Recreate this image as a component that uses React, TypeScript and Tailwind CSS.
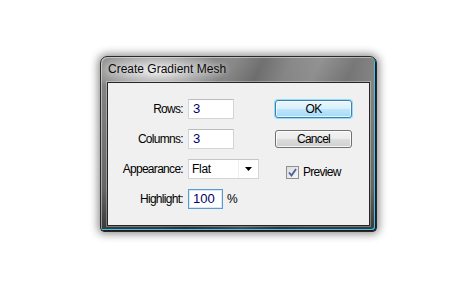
import React from 'react';

const ui = "font-['Liberation_Sans',Arial,sans-serif] text-[12px] tracking-[-0.7px] text-black";

function Field({ label, children }: { label: string; children: React.ReactNode }) {
  return (
    <>
      <span className="h-[20px] leading-[20px] text-right">{label}</span>
      <div className="h-[20px] flex items-center">{children}</div>
    </>
  );
}

function TextBox({ value, width, focused }: { value: string; width: string; focused?: boolean }) {
  return (
    <div
      className={
        focused
          ? `${width} h-[20px] bg-white border border-[#5d9ad2] shadow-[inset_0_0_0_1px_#d6e8f7] pl-[4px] leading-[18px] text-[13px] tracking-normal text-[#00006a]`
          : `${width} h-[20px] bg-white border border-[#d2d4d8] border-t-[#b9bcc2] pl-[4px] leading-[18px] text-[13px] tracking-normal text-[#00006a]`
      }
    >
      {value}
    </div>
  );
}

function Select() {
  return (
    <div className="w-[71px] h-[20px] bg-white border border-[#d2d4d8] border-t-[#c2c5ca] flex">
      <span className="flex-1 pl-[3px] leading-[18px] tracking-[-0.3px] border-r border-[#eceef1]">Flat</span>
      <span className="w-[19px] flex items-center justify-center">
        <svg width="7" height="4" viewBox="0 0 7 4">
          <path d="M0 0H7L3.5 4Z" fill="#000" />
        </svg>
      </span>
    </div>
  );
}

export default function App() {
  return (
    <div className="w-[467px] h-[286px] bg-white pt-[56px] pl-[100px]">
      <div className="w-[277px] h-[176px] flex flex-col rounded-t-[7px] rounded-b-[4px] border border-[#2a2a2a] bg-[radial-gradient(ellipse_70px_22px_at_55px_14px,rgba(255,255,255,0.85),rgba(255,255,255,0)),linear-gradient(115deg,rgba(0,0,0,0)_38%,rgba(0,0,0,0.18)_46%,rgba(0,0,0,0)_54%,rgba(255,255,255,0.08)_62%,rgba(0,0,0,0.12)_72%,rgba(0,0,0,0)_80%),linear-gradient(to_bottom,#8a8a8a,#7c7c7c_35%,#666666_75%,#383838)] shadow-[inset_-1px_-1px_0_#1c1c1c,inset_-2px_-2px_0_#3cc4ee,inset_1px_1px_0_rgba(255,255,255,0.45),0_0_9px_2px_rgba(0,0,0,0.45)]">
        <div className="h-[25px] pl-[7px] leading-[25px] font-['Liberation_Sans',Arial,sans-serif] text-[12px] text-[#0a0a0a] [text-shadow:0_0_6px_rgba(255,255,255,0.9)]">
          Create Gradient Mesh
        </div>
        <div className={`${ui} mx-[6px] w-[263px] h-[144px] bg-[#f0f0f0] border border-[#262626] shadow-[0_0_0_1px_rgba(255,255,255,0.3)] flex`}>
          <div className="w-[167px] pt-[16px]">
            <div className="grid grid-cols-[75px_auto] gap-x-[5px] gap-y-[10px]">
              <Field label="Rows:">
                <TextBox value="3" width="w-[46px]" />
              </Field>
              <Field label="Columns:">
                <TextBox value="3" width="w-[46px]" />
              </Field>
              <Field label="Appearance:">
                <Select />
              </Field>
              <Field label="Highlight:">
                <TextBox value="100" width="w-[35px]" focused />
                <span className="ml-[4px]">%</span>
              </Field>
            </div>
          </div>
          <div className="pt-[17px] flex flex-col">
            <button className="w-[77px] h-[18px] rounded-[3px] border border-[#3c7fb1] bg-[linear-gradient(to_bottom,#eaf6fd,#d9f0fc_50%,#bee6fd_50%,#a7d9f5)] shadow-[0_0_0_1px_#8fdcf8,inset_0_0_0_1px_rgba(255,255,255,0.7)] leading-[16px]">
              OK
            </button>
            <button className="mt-[12px] w-[77px] h-[18px] rounded-[3px] border border-[#707070] bg-[linear-gradient(to_bottom,#f2f2f2,#ebebeb_50%,#dddddd_50%,#cfcfcf)] shadow-[inset_0_0_0_1px_rgba(255,255,255,0.8)] leading-[16px]">
              Cancel
            </button>
            <div className="mt-[18px] ml-[11px] flex items-center gap-[4px] h-[13px]">
              <span className="w-[13px] h-[13px] border border-[#8f8f8f] bg-[linear-gradient(135deg,#dcdcdc,#f6f6f6)] flex items-center justify-center">
                <svg width="9" height="9" viewBox="0 0 9 9">
                  <path d="M1 4.5L3.5 7.5L8 1" fill="none" stroke="#4a5e9a" strokeWidth="1.8" />
                </svg>
              </span>
              <span className="leading-[13px]">Preview</span>
            </div>
          </div>
        </div>
      </div>
    </div>
  );
}
